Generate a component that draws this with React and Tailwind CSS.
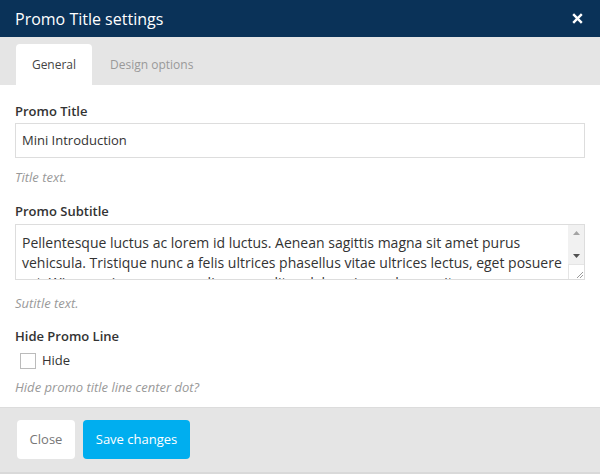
import React from 'react';

const subtitle =
  'Pellentesque luctus ac lorem id luctus. Aenean sagittis magna sit amet purus vehicsula. Tristique nunc a felis ultrices phasellus vitae ultrices lectus, eget posuere est. Wis nunc ipsum suspendisse eu velit sodales, viverra lorem vitae, accumsan neque. Donec at mauris ut mi ultricies elementum.';

export default function App() {
  return (
    <div className="w-[600px] h-[474px] bg-white flex flex-col overflow-hidden font-['Open_Sans',sans-serif] text-[#333]">
      {/* Header */}
      <div className="h-[37px] shrink-0 bg-[#0a3258] flex items-center justify-between pl-[15px] pr-[17px]">
        <span className="text-white text-[16px] leading-none">Promo Title settings</span>
        <svg width="11" height="11" viewBox="0 0 11 11" className="text-white">
          <path d="M1.2 1.2 L9.8 9.8 M9.8 1.2 L1.2 9.8" stroke="currentColor" strokeWidth="2.4" />
        </svg>
      </div>

      {/* Tabs */}
      <div className="h-[48px] shrink-0 bg-[#e5e5e5] flex items-end pl-[16px]">
        <div className="h-[41px] w-[76px] bg-white rounded-t-[4px] flex items-center justify-center text-[12px] text-[#444]">
          General
        </div>
        <div className="h-[41px] px-[18px] flex items-center text-[12px] text-[#999]">Design options</div>
      </div>

      {/* Body */}
      <div className="flex-1 px-[15px] pt-[17px]">
        <div className="text-[13px] font-semibold leading-[18px] text-[#333]">Promo Title</div>
        <div className="mt-[3px] h-[35px] border border-[#ddd] flex items-center px-[6px] text-[13px] text-[#333]">
          Mini Introduction
        </div>
        <div className="mt-[10px] text-[13px] italic text-[#999] leading-[18px]">Title text.</div>

        <div className="mt-[16px] text-[13px] font-semibold leading-[18px] text-[#333]">Promo Subtitle</div>
        <div className="mt-[4px] h-[56px] border border-[#ddd] flex">
          <div className="flex-1 overflow-hidden pl-[6px] pr-[4px] pt-[8px] text-[14px] leading-[20px] text-[#333]">
            {subtitle}
          </div>
          <div className="w-[16px] flex flex-col">
            <div className="flex-1 bg-[#f1f1f1] flex flex-col items-center justify-between py-[6px]">
              <svg width="7" height="4" viewBox="0 0 7 4">
                <path d="M0 4 L3.5 0 L7 4 Z" fill="#a3a3a3" />
              </svg>
              <svg width="7" height="4" viewBox="0 0 7 4">
                <path d="M0 0 L3.5 4 L7 0 Z" fill="#505050" />
              </svg>
            </div>
            <div className="h-[15px] bg-white border-t border-l border-[#e5e5e5] flex items-end justify-end">
              <svg width="8" height="8" viewBox="0 0 8 8">
                <path d="M1 7 L7 1 M4 7 L7 4" stroke="#9a9a9a" strokeWidth="1" />
              </svg>
            </div>
          </div>
        </div>
        <div className="mt-[14px] text-[13px] italic text-[#999] leading-[18px]">Sutitle text.</div>

        <div className="mt-[15px] text-[13px] font-semibold leading-[18px] text-[#333]">Hide Promo Line</div>
        <label className="mt-[7px] ml-[5px] flex items-center gap-[6px] h-[18px]">
          <span className="w-[16px] h-[16px] border border-[#bbb] bg-white"></span>
          <span className="text-[13px] text-[#333]">Hide</span>
        </label>
        <div className="mt-[8px] text-[13px] italic text-[#999] leading-[18px]">Hide promo title line center dot?</div>
      </div>

      {/* Footer */}
      <div className="h-[67px] shrink-0 bg-[#e5e5e5] border-t border-[#dcdcdc] border-b-2 border-b-[#d9d9d9] flex items-start pt-[12px] pl-[17px] gap-[8px]">
        <button className="h-[39px] w-[58px] bg-white rounded-[4px] text-[13px] text-[#777]">Close</button>
        <button className="h-[39px] w-[107px] bg-[#00aeef] rounded-[4px] text-[13px] text-white">Save changes</button>
      </div>
    </div>
  );
}
